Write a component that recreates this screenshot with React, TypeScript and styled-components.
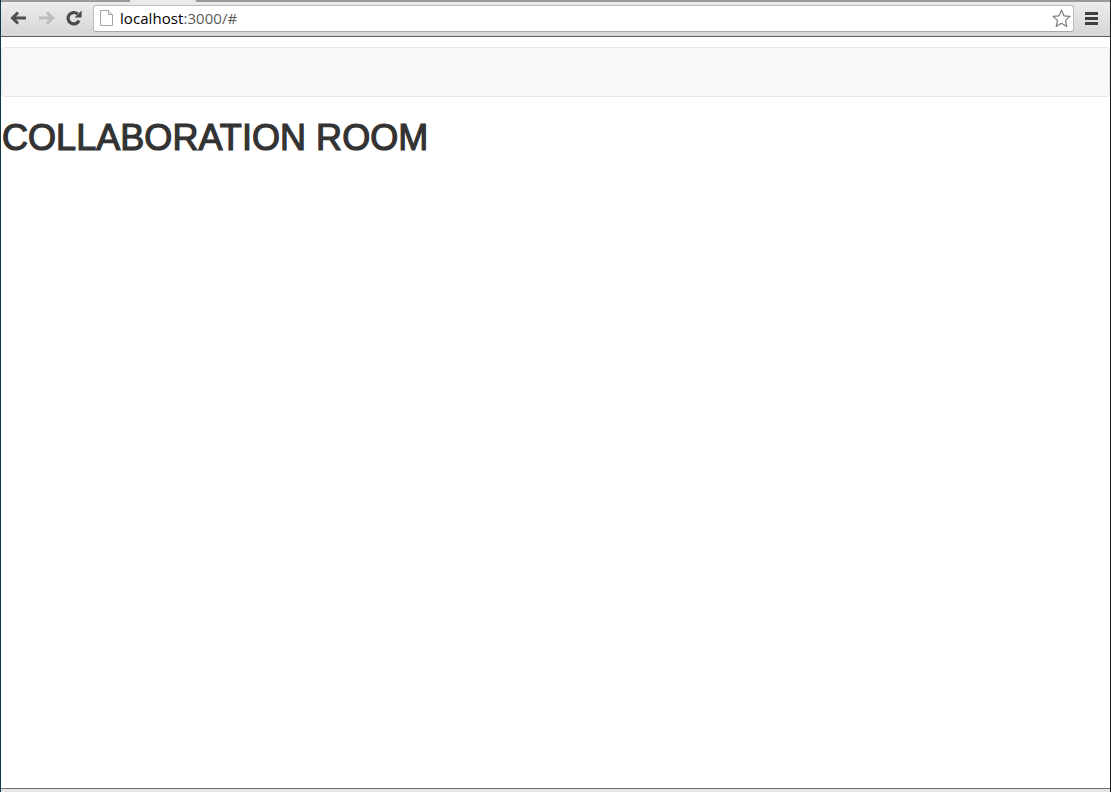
import React from "react";
import styled, { createGlobalStyle } from "styled-components";

const GlobalStyle = createGlobalStyle`
  html, body {
    margin: 0;
    padding: 0;
    background: #fff;
    overflow: hidden;
  }
  * {
    box-sizing: border-box;
  }
`;

const Window = styled.div`
  display: flex;
  flex-direction: column;
  width: 1111px;
  height: 792px;
  border-left: 1px solid #0f3b44;
  border-right: 1px solid #1c1c1c;
  font-family: "Liberation Sans", Arial, sans-serif;
`;

const TabStrip = styled.div`
  display: flex;
  height: 2px;
  flex-shrink: 0;
  background: #9a9a9a;
  padding-left: 129px;
`;

const ActiveTab = styled.div`
  width: 66px;
  background: #e9e9e9;
`;

const Toolbar = styled.div`
  display: flex;
  align-items: center;
  height: 35px;
  flex-shrink: 0;
  padding: 0 0 2px 8px;
  background: linear-gradient(#ececec, #d6d6d6);
  border-bottom: 1px solid #5f5f5f;
`;

const NavButton = styled.div<{ $gap?: number }>`
  display: flex;
  align-items: center;
  justify-content: center;
  width: 18px;
  height: 18px;
  margin-right: ${(p) => p.$gap ?? 10}px;
`;

const Omnibox = styled.div`
  display: flex;
  align-items: center;
  width: 981px;
  height: 27px;
  padding: 0 2px 0 6px;
  background: #fff;
  border: 1px solid #bcbcbc;
  border-bottom-color: #a8a8a8;
  border-radius: 3px;
`;

const Url = styled.span`
  flex: 1;
  margin-left: 7px;
  font-family: "Open Sans", "Liberation Sans", sans-serif;
  font-size: 15px;
  letter-spacing: 0.06px;
  color: #000;
`;

const UrlRest = styled.span`
  color: #5b5b5b;
`;

const MenuButton = styled.div`
  display: flex;
  flex-direction: column;
  gap: 2px;
  width: 13px;
  margin-left: 11px;
`;

const MenuBar = styled.div`
  height: 3px;
  background: #3f3f3f;
`;

const Page = styled.main`
  flex: 1;
  padding-top: 10px;
  background: #fff;
`;

const Navbar = styled.nav`
  height: 50px;
  background: #f8f8f8;
  border: 1px solid #e7e7e7;
  border-radius: 4px;
`;

const Title = styled.h1`
  margin: 21px 0 0 1px;
  font-size: 36px;
  line-height: 40px;
  font-weight: 400;
  letter-spacing: 0.05px;
  color: #333;
  -webkit-text-stroke: 1.2px #333;
`;

const StatusEdge = styled.div`
  height: 4px;
  flex-shrink: 0;
  background: #e6e6e6;
  border-top: 1px solid #707070;
`;

function BackIcon({ color }: { color: string }) {
  return (
    <svg width="17" height="14" viewBox="0 0 17 14">
      <path d="M16 7H3M8 1.5 2.5 7 8 12.5" fill="none" stroke={color} strokeWidth="3" />
    </svg>
  );
}

function ForwardIcon({ color }: { color: string }) {
  return (
    <svg width="17" height="14" viewBox="0 0 17 14">
      <path d="M1 7h13M9 1.5 14.5 7 9 12.5" fill="none" stroke={color} strokeWidth="3" />
    </svg>
  );
}

function ReloadIcon() {
  return (
    <svg width="16" height="16" viewBox="0 0 16 16">
      <path d="M13 10.5A5.7 5.7 0 1 1 11.6 4" fill="none" stroke="#4a4a4a" strokeWidth="3.2" />
      <path d="M8.6 7.6h7V.6z" fill="#4a4a4a" />
    </svg>
  );
}

function PageIcon() {
  return (
    <svg width="13" height="16" viewBox="0 0 13 16">
      <path d="M.5.5h8l4 4v11H.5z" fill="#fff" stroke="#a4a4a4" />
      <path d="M8.5.5v4h4" fill="#ececec" stroke="#a4a4a4" />
    </svg>
  );
}

function StarIcon() {
  return (
    <svg width="19" height="19" viewBox="0 0 19 19">
      <path
        d="M9.5 1.2l2.5 5.6 6 .6-4.5 4 1.3 6-5.3-3.1-5.3 3.1 1.3-6L1 7.4l6-.6z"
        fill="#fff"
        stroke="#7c7c7c"
        strokeWidth="1.2"
        strokeLinejoin="round"
      />
    </svg>
  );
}

export default function App() {
  return (
    <>
      <GlobalStyle />
      <Window>
        <TabStrip>
          <ActiveTab />
        </TabStrip>
        <Toolbar>
          <NavButton>
            <BackIcon color="#505050" />
          </NavButton>
          <NavButton>
            <ForwardIcon color="#bcbcbc" />
          </NavButton>
          <NavButton>
            <ReloadIcon />
          </NavButton>
          <Omnibox>
            <PageIcon />
            <Url>
              localhost<UrlRest>:3000/#</UrlRest>
            </Url>
            <StarIcon />
          </Omnibox>
          <MenuButton>
            <MenuBar />
            <MenuBar />
            <MenuBar />
          </MenuButton>
        </Toolbar>
        <Page>
          <Navbar />
          <Title>COLLABORATION ROOM</Title>
        </Page>
        <StatusEdge />
      </Window>
    </>
  );
}
